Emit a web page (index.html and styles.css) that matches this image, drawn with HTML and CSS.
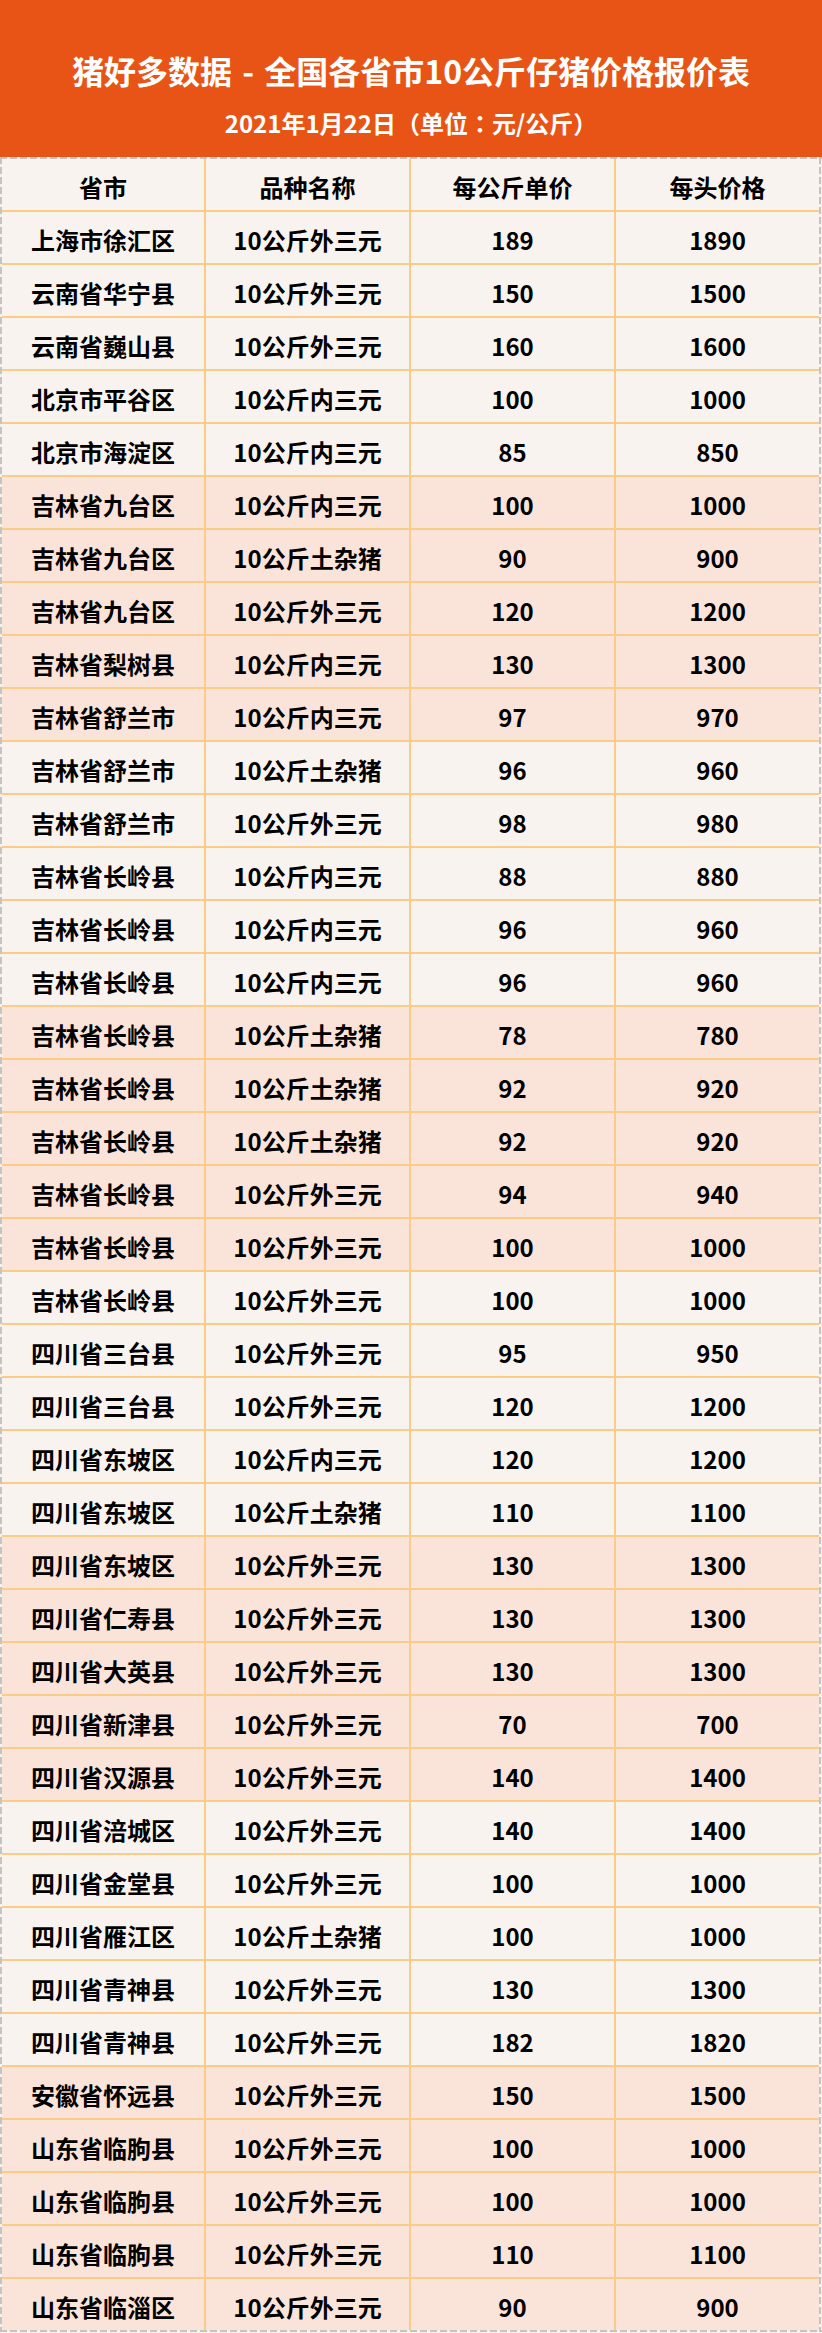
FILE: index.html
```html
<!DOCTYPE html>
<html lang="zh-CN">
<head>
<meta charset="utf-8">
<title>猪好多数据 - 全国各省市10公斤仔猪价格报价表</title>
<link rel="stylesheet" href="styles.css">
</head>
<body>
<header class="banner">
  <h1 class="title">猪好多数据 - 全国各省市10公斤仔猪价格报价表</h1>
  <p class="subtitle">2021年1月22日<span class="punct" lang="zh-Hant">（</span>单位<span class="punct" lang="zh-Hant">：</span>元/公斤<span class="punct" lang="zh-Hant">）</span></p>
</header>
<section class="frame">
  <div class="grid">
    <div class="row light head"><div>省市</div><div>品种名称</div><div>每公斤单价</div><div>每头价格</div></div>
    <div class="row light"><div>上海市徐汇区</div><div>10公斤外三元</div><div>189</div><div>1890</div></div>
    <div class="row light"><div>云南省华宁县</div><div>10公斤外三元</div><div>150</div><div>1500</div></div>
    <div class="row light"><div>云南省巍山县</div><div>10公斤外三元</div><div>160</div><div>1600</div></div>
    <div class="row light"><div>北京市平谷区</div><div>10公斤内三元</div><div>100</div><div>1000</div></div>
    <div class="row light"><div>北京市海淀区</div><div>10公斤内三元</div><div>85</div><div>850</div></div>
    <div class="row pink"><div>吉林省九台区</div><div>10公斤内三元</div><div>100</div><div>1000</div></div>
    <div class="row pink"><div>吉林省九台区</div><div>10公斤土杂猪</div><div>90</div><div>900</div></div>
    <div class="row pink"><div>吉林省九台区</div><div>10公斤外三元</div><div>120</div><div>1200</div></div>
    <div class="row pink"><div>吉林省梨树县</div><div>10公斤内三元</div><div>130</div><div>1300</div></div>
    <div class="row pink"><div>吉林省舒兰市</div><div>10公斤内三元</div><div>97</div><div>970</div></div>
    <div class="row light"><div>吉林省舒兰市</div><div>10公斤土杂猪</div><div>96</div><div>960</div></div>
    <div class="row light"><div>吉林省舒兰市</div><div>10公斤外三元</div><div>98</div><div>980</div></div>
    <div class="row light"><div>吉林省长岭县</div><div>10公斤内三元</div><div>88</div><div>880</div></div>
    <div class="row light"><div>吉林省长岭县</div><div>10公斤内三元</div><div>96</div><div>960</div></div>
    <div class="row light"><div>吉林省长岭县</div><div>10公斤内三元</div><div>96</div><div>960</div></div>
    <div class="row pink"><div>吉林省长岭县</div><div>10公斤土杂猪</div><div>78</div><div>780</div></div>
    <div class="row pink"><div>吉林省长岭县</div><div>10公斤土杂猪</div><div>92</div><div>920</div></div>
    <div class="row pink"><div>吉林省长岭县</div><div>10公斤土杂猪</div><div>92</div><div>920</div></div>
    <div class="row pink"><div>吉林省长岭县</div><div>10公斤外三元</div><div>94</div><div>940</div></div>
    <div class="row pink"><div>吉林省长岭县</div><div>10公斤外三元</div><div>100</div><div>1000</div></div>
    <div class="row light"><div>吉林省长岭县</div><div>10公斤外三元</div><div>100</div><div>1000</div></div>
    <div class="row light"><div>四川省三台县</div><div>10公斤外三元</div><div>95</div><div>950</div></div>
    <div class="row light"><div>四川省三台县</div><div>10公斤外三元</div><div>120</div><div>1200</div></div>
    <div class="row light"><div>四川省东坡区</div><div>10公斤内三元</div><div>120</div><div>1200</div></div>
    <div class="row light"><div>四川省东坡区</div><div>10公斤土杂猪</div><div>110</div><div>1100</div></div>
    <div class="row pink"><div>四川省东坡区</div><div>10公斤外三元</div><div>130</div><div>1300</div></div>
    <div class="row pink"><div>四川省仁寿县</div><div>10公斤外三元</div><div>130</div><div>1300</div></div>
    <div class="row pink"><div>四川省大英县</div><div>10公斤外三元</div><div>130</div><div>1300</div></div>
    <div class="row pink"><div>四川省新津县</div><div>10公斤外三元</div><div>70</div><div>700</div></div>
    <div class="row pink"><div>四川省汉源县</div><div>10公斤外三元</div><div>140</div><div>1400</div></div>
    <div class="row light"><div>四川省涪城区</div><div>10公斤外三元</div><div>140</div><div>1400</div></div>
    <div class="row light"><div>四川省金堂县</div><div>10公斤外三元</div><div>100</div><div>1000</div></div>
    <div class="row light"><div>四川省雁江区</div><div>10公斤土杂猪</div><div>100</div><div>1000</div></div>
    <div class="row light"><div>四川省青神县</div><div>10公斤外三元</div><div>130</div><div>1300</div></div>
    <div class="row light"><div>四川省青神县</div><div>10公斤外三元</div><div>182</div><div>1820</div></div>
    <div class="row pink"><div>安徽省怀远县</div><div>10公斤外三元</div><div>150</div><div>1500</div></div>
    <div class="row pink"><div>山东省临朐县</div><div>10公斤外三元</div><div>100</div><div>1000</div></div>
    <div class="row pink"><div>山东省临朐县</div><div>10公斤外三元</div><div>100</div><div>1000</div></div>
    <div class="row pink"><div>山东省临朐县</div><div>10公斤外三元</div><div>110</div><div>1100</div></div>
    <div class="row pink"><div>山东省临淄区</div><div>10公斤外三元</div><div>90</div><div>900</div></div>
  </div>
</section>
</body>
</html>
```

FILE: styles.css
```css
* { box-sizing: border-box; }

html, body {
  margin: 0;
  padding: 0;
  background: #f8f3ef;
}

body {
  width: 822px;
  font-family: "Noto Sans CJK SC", "Noto Sans", "Liberation Sans", sans-serif;
  font-weight: 700;
  color: #000;
}

.banner {
  height: 157px;
  background: #e85416;
  color: #fff;
  display: flex;
  flex-direction: column;
  align-items: center;
  padding-top: 49px;
}

.title {
  margin: 0;
  font-size: 32px;
  line-height: 42px;
  font-weight: 700;
  word-spacing: 3px;
}

.subtitle {
  margin: 16px 0 0;
  font-size: 24px;
  line-height: 32px;
  font-weight: 700;
}

.punct {
  font-family: "Noto Sans CJK TC", "Noto Sans CJK SC", sans-serif;
}

.frame {
  width: 822px;
  padding: 2px 3px 2px 2px;
  background:
    repeating-linear-gradient(90deg, #c4c4c4 0 7px, transparent 7px 10px) left top / 100% 2px no-repeat,
    repeating-linear-gradient(90deg, #c4c4c4 0 7px, transparent 7px 10px) left bottom / 100% 2px no-repeat,
    repeating-linear-gradient(180deg, #c4c4c4 0 7px, transparent 7px 10px) left top / 2px 100% no-repeat,
    repeating-linear-gradient(180deg, #c4c4c4 0 7px, transparent 7px 10px) 819px 0 / 2px 100% no-repeat,
    #f6f1ed;
}

.grid {
  display: flex;
  flex-direction: column;
  gap: 2px;
  background: #fbcb88;
}

.row {
  display: grid;
  grid-template-columns: 202px 203px 203px 203px;
  gap: 2px;
  background: #fbcb88;
}

.row > div {
  height: 51px;
  display: flex;
  align-items: center;
  justify-content: center;
  font-size: 24px;
  line-height: 1;
  padding-top: 4px;
}

.row.light > div { background: #f8f3ef; }
.row.pink > div { background: #fae3d8; }
```
